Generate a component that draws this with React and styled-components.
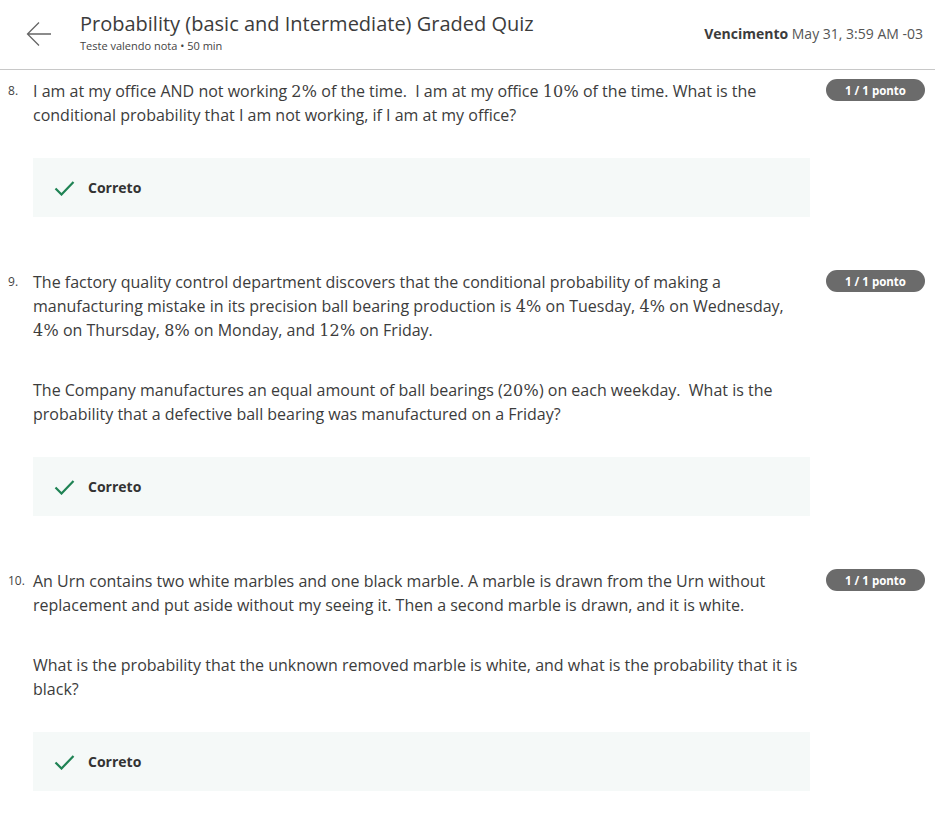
import React from 'react';
import styled, { createGlobalStyle } from 'styled-components';

const GlobalStyle = createGlobalStyle`
  body {
    margin: 0;
    background: #fff;
    font-family: "Open Sans", "Liberation Sans", sans-serif;
    color: #373a3c;
  }
`;

const Header = styled.header`
  display: flex;
  align-items: center;
  height: 70px;
  padding: 0 12px 0 24px;
  border-bottom: 1px solid #c8c8c8;
  box-sizing: border-box;
`;

const BackButton = styled.button`
  display: flex;
  align-items: center;
  justify-content: center;
  width: 30px;
  height: 30px;
  padding: 0;
  margin-right: 26px;
  margin-top: -2px;
  border: none;
  background: none;
`;

const TitleBlock = styled.div`
  flex: 1;
  display: flex;
  flex-direction: column;
  margin-top: -4px;
`;

const Title = styled.h1`
  margin: 0;
  font-size: 20px;
  font-weight: 400;
  line-height: 26px;
  color: #3c3c3c;
`;

const Subtitle = styled.div`
  font-size: 11px;
  line-height: 16px;
  margin-top: 1px;
  color: #444;
`;

const Due = styled.div`
  font-size: 14px;
  color: #555;
  margin-top: -2px;
  b {
    font-weight: 700;
    color: #3c3c3c;
  }
`;

const List = styled.main`
  display: flex;
  flex-direction: column;
  padding: 9px 10px 26px 0;
  gap: 53px;
`;

const Question = styled.section`
  display: flex;
  align-items: flex-start;
`;

const Number = styled.div`
  width: 33px;
  box-sizing: border-box;
  padding-left: 8px;
  font-size: 12px;
  line-height: 24px;
  color: #444;
  flex-shrink: 0;
`;

const Body = styled.div`
  width: 777px;
  flex-shrink: 0;
`;

const Para = styled.p`
  margin: 0 0 36px;
  font-size: 16px;
  line-height: 24px;
  color: #3c3c3c;
  &:last-of-type {
    margin-bottom: 31px;
  }
`;

const M = styled.span`
  font-family: "DejaVu Serif", "Liberation Serif", serif;
  font-size: 16px;
  line-height: 1;
  letter-spacing: 0.2px;
`;

const Feedback = styled.div`
  display: flex;
  align-items: center;
  gap: 13px;
  height: 59px;
  padding-left: 21px;
  background: #f5f9f8;
  font-size: 14px;
  font-weight: 700;
  color: #333;
`;

const Badge = styled.div`
  margin-left: 16px;
  width: 100px;
  height: 22px;
  border-radius: 11px;
  background: #6b6b6b;
  color: #fff;
  font-size: 11.5px;
  font-weight: 700;
  display: flex;
  align-items: center;
  justify-content: center;
`;

const Check = () => (
  <svg width="21" height="16" viewBox="0 0 21 16">
    <path d="M1.5 8.5 L7.5 14.5 L19.5 2" fill="none" stroke="#1f8354" strokeWidth="2.2" />
  </svg>
);

const Arrow = () => (
  <svg width="26" height="26" viewBox="0 0 26 26">
    <path d="M13 1.5 L1.5 13 L13 24.5 M1.5 13 H25" fill="none" stroke="#666" strokeWidth="1.3" />
  </svg>
);

const QuestionItem = ({ n, paras }) => (
  <Question>
    <Number>{n}.</Number>
    <Body>
      {paras.map((p, i) => (
        <Para key={i}>{p}</Para>
      ))}
      <Feedback>
        <Check />
        Correto
      </Feedback>
    </Body>
    <Badge>1 / 1 ponto</Badge>
  </Question>
);

const App = () => (
  <>
    <GlobalStyle />
    <Header>
      <BackButton aria-label="Voltar">
        <Arrow />
      </BackButton>
      <TitleBlock>
        <Title>Probability (basic and Intermediate) Graded Quiz</Title>
        <Subtitle>Teste valendo nota • 50 min</Subtitle>
      </TitleBlock>
      <Due>
        <b>Vencimento</b> May 31, 3:59 AM -03
      </Due>
    </Header>
    <List>
      <QuestionItem
        n={8}
        paras={[
          <>
            I am at my office AND not working <M>2%</M> of the time.&nbsp; I am at my office <M>10%</M> of the time. What is the conditional probability that I am not working, if I am at my office?
          </>,
        ]}
      />
      <QuestionItem
        n={9}
        paras={[
          <>
            The factory quality control department discovers that the conditional probability of making a manufacturing mistake in its precision ball bearing production is <M>4%</M> on Tuesday, <M>4%</M> on Wednesday, <M>4%</M> on Thursday, <M>8%</M> on Monday, and <M>12%</M> on Friday.
          </>,
          <>
            The Company manufactures an equal amount of ball bearings (<M>20%</M>) on each weekday.&nbsp; What is the probability that a defective ball bearing was manufactured on a Friday?
          </>,
        ]}
      />
      <QuestionItem
        n={10}
        paras={[
          <>
            An Urn contains two white marbles and one black marble. A marble is drawn from the Urn without replacement and put aside without my seeing it. Then a second marble is drawn, and it is white.
          </>,
          <>
            What is the probability that the unknown removed marble is white, and what is the probability that it is black?
          </>,
        ]}
      />
    </List>
  </>
);

export default App;
